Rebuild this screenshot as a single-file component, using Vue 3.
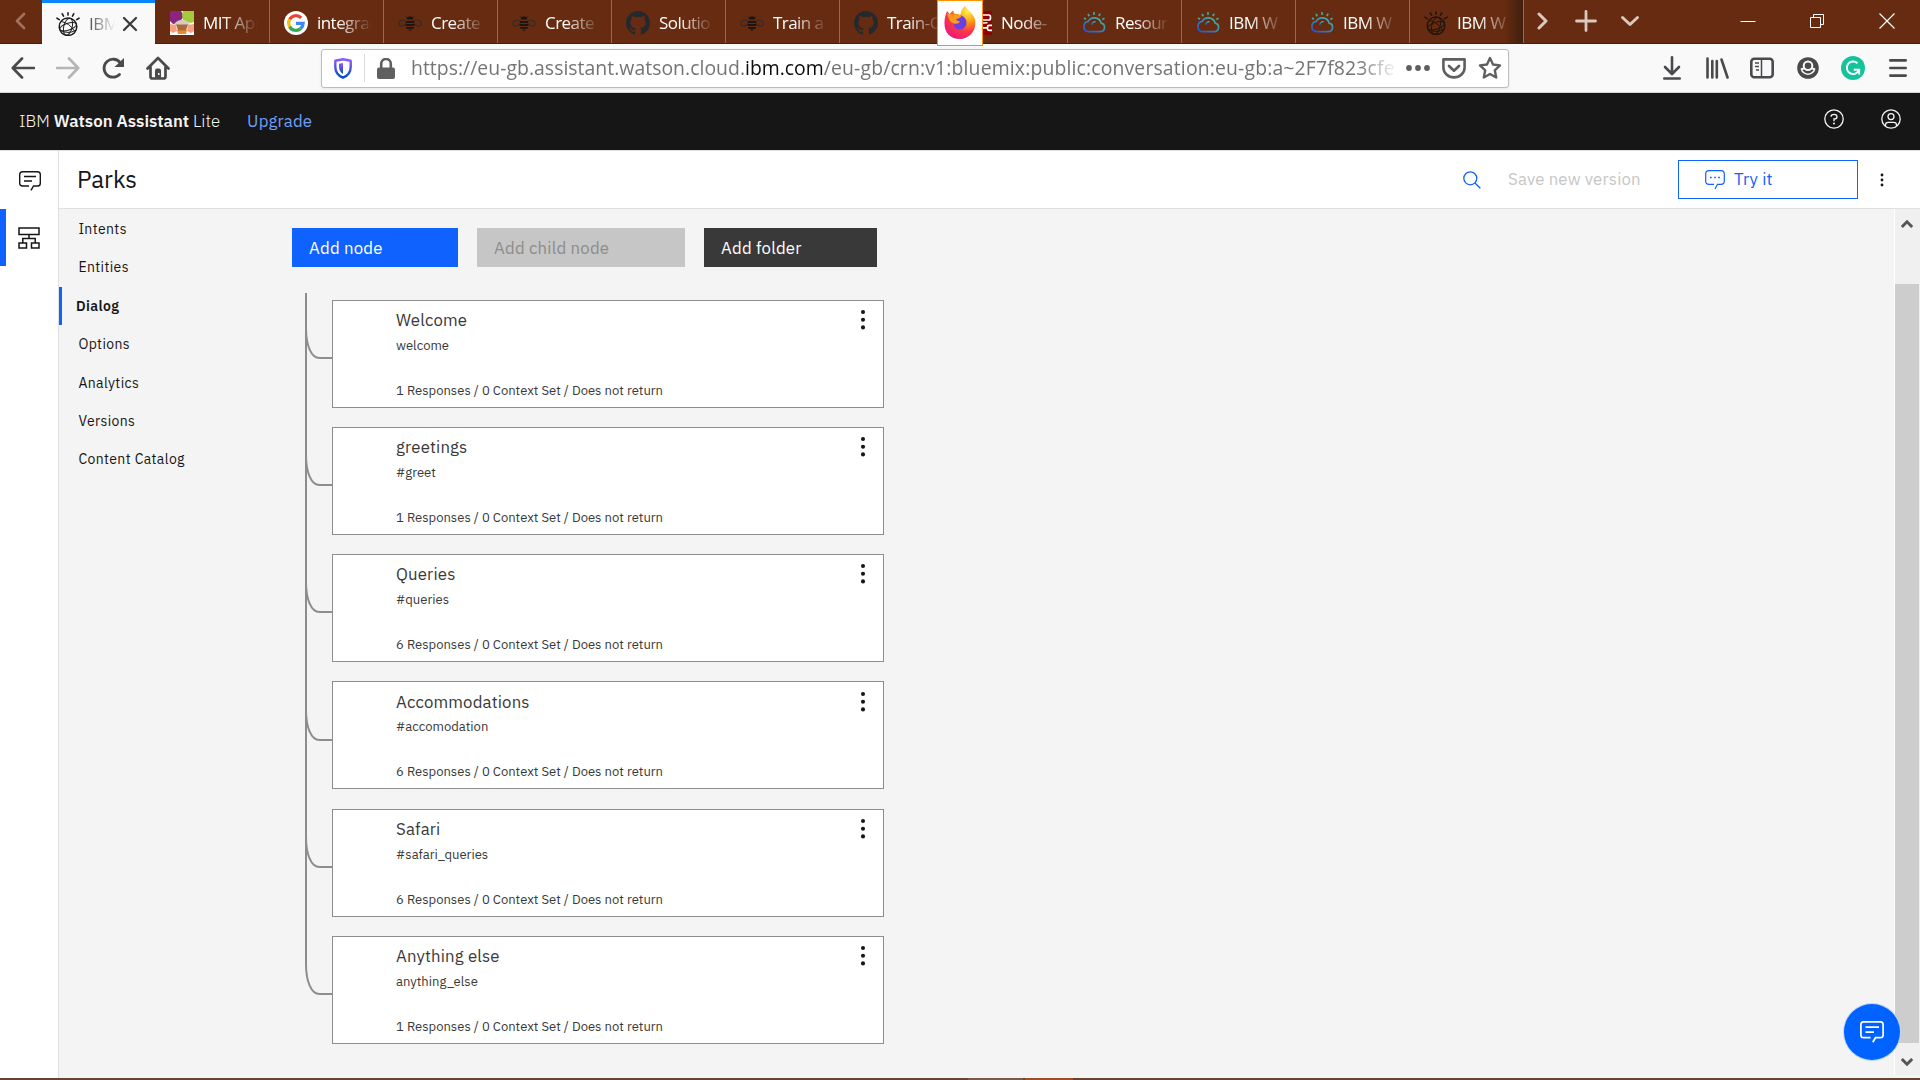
<script setup>
const tabs = [
  { icon: 'mit', title: 'MIT App' },
  { icon: 'google', title: 'integrat' },
  { icon: 'bee', title: 'Create' },
  { icon: 'bee', title: 'Create' },
  { icon: 'github', title: 'Solutio' },
  { icon: 'bee', title: 'Train a' },
  { icon: 'github', title: 'Train-C' },
  { icon: 'nodered', title: 'Node-' },
  { icon: 'cloud', title: 'Resour' },
  { icon: 'cloud', title: 'IBM W' },
  { icon: 'cloud', title: 'IBM W' },
  { icon: 'watson', title: 'IBM W' },
]
const menu = ['Intents', 'Entities', 'Dialog', 'Options', 'Analytics', 'Versions', 'Content Catalog']
const nodes = [
  { name: 'Welcome', cond: 'welcome', n: 1 },
  { name: 'greetings', cond: '#greet', n: 1 },
  { name: 'Queries', cond: '#queries', n: 6 },
  { name: 'Accommodations', cond: '#accomodation', n: 6 },
  { name: 'Safari', cond: '#safari_queries', n: 6 },
  { name: 'Anything else', cond: 'anything_else', n: 1 },
]
const pitch = 127.2
const branch = (i) => {
  const y = Math.round(65 + pitch * i)
  return `M1 ${y - 30}C1 ${y - 13} 6 ${y} 14.5 ${y}H27`
}
</script>

<template>
  <div class="screen">
    <svg class="defs" width="0" height="0">
      <defs>
        <linearGradient id="cloudg" x1="0" y1="1" x2="1" y2="0"><stop offset="0" stop-color="#2a4fd0" /><stop offset=".6" stop-color="#3a8fb5" /><stop offset="1" stop-color="#4fc08d" /></linearGradient>
        <linearGradient id="shieldg" x1="0" y1="0" x2="0" y2="1"><stop offset="0" stop-color="#9059ff" /><stop offset="1" stop-color="#0250bb" /></linearGradient>
        <radialGradient id="foxg" cx=".75" cy=".15" r="1"><stop offset="0" stop-color="#fff44f" /><stop offset=".35" stop-color="#ff980e" /><stop offset=".62" stop-color="#ff3647" /><stop offset="1" stop-color="#e31587" /></radialGradient>
        <symbol id="watson" viewBox="0 0 24 24">
          <g fill="none" stroke="currentColor" stroke-width="1" stroke-linecap="round">
            <circle cx="12" cy="14.700" r="8.800" stroke-width="1.500" />
            <ellipse cx="12" cy="14.700" rx="8.700" ry="3.400" transform="rotate(-18 12 14.700)" />
            <ellipse cx="12" cy="14.700" rx="4.200" ry="8.700" transform="rotate(14 12 14.700)" />
            <path d="M4.500 18.500q7.500 4 15 0M5.500 9.500q8 1.500 13 9.500" />
            <path stroke-width="1.600" d="M12 .900v2.200M6.300 1.800l1.200 2.300M17.700 1.800l-1.200 2.300M1 6.200l2.300 1.400M23 6.200l-2.300 1.400" />
          </g>
        </symbol>
      </defs>
    </svg>

    <div class="tabstrip">
      <div class="scroll-back">
        <svg width="12" height="18" viewBox="0 0 12 18"><path d="M10 2L3 9l7 7" fill="none" stroke="#a0705c" stroke-width="2.800" stroke-linecap="round" stroke-linejoin="round" /></svg>
      </div>
      <div class="tab active">
        <svg width="24" height="24" class="fav dark"><use href="#watson" /></svg>
        <span class="tab-title">IBM</span>
        <svg class="close" width="16" height="16" viewBox="0 0 16 16"><path d="M2 2l12 12M14 2L2 14" stroke="#3d3d3f" stroke-width="2.300" stroke-linecap="round" /></svg>
      </div>
      <div v-for="(t, i) in tabs" :key="i" class="tab">
        <svg v-if="t.icon === 'mit'" class="fav" width="24" height="24" viewBox="0 0 24 24">
          <path fill="#fff" d="M0 0h24v24H0z" /><path fill="#8b2580" d="M0 0h11l3 5-5 7-6 1-3-3z" /><path fill="#a4cb3a" d="M13 0h11v11l-4 1-7-3-1-5z" /><path fill="#f4a083" d="M0 13l6 1 1 6-4 2-3-2zM24 13l-6 1-1 6 4 2 3-2z" /><path fill="#f08a2c" d="M7 19h10l-1 4H8z" /><path fill="#d9cabd" d="M4 14q2-5 8-5t8 5z" /><path fill="#a86a3d" d="M6 13.500h12l-2 6H8z" />
        </svg>
        <svg v-else-if="t.icon === 'google'" class="fav" width="24" height="24" viewBox="0 0 24 24">
          <circle cx="12" cy="12" r="12" fill="#fff" />
          <g fill="none" stroke-width="3.200"><path stroke="#ea4335" d="M5.600 8.400A7.300 7.300 0 0 1 17.200 6.900" /><path stroke="#fbbc05" d="M5.600 15.600A7.300 7.300 0 0 1 5.600 8.400" /><path stroke="#34a853" d="M16.800 17.500A7.300 7.300 0 0 1 5.600 15.600" /><path stroke="#4285f4" d="M12 12.300h7.200A7.300 7.300 0 0 1 16.800 17.500" /></g>
        </svg>
        <svg v-else-if="t.icon === 'bee'" class="fav" width="24" height="24" viewBox="0 0 24 24">
          <g fill="none" stroke="#3b2a22" stroke-width="1.300"><path d="M9 11C5 7.500 1 9.500.800 13c1 3.500 6 2.500 8.200-2zM15 11c4-3.500 8-1.500 8.200 2-1 3.500-6 2.500-8.200-2z" /><path d="M9.500 7.500L8 5.200M14.500 7.500L16 5.200" /></g>
          <path fill="#1c1512" d="M9 7.300C9 5 15 5 15 7.300v1.200H9zM8 10h8v2H8zM7.500 13h9v2h-9zM8.200 16h7.600v1.700H8.200zM10 18.500h4L12 20z" />
        </svg>
        <svg v-else-if="t.icon === 'github'" class="fav" width="24" height="24" viewBox="0 0 16 16">
          <path fill="#24292e" d="M8 0C3.580 0 0 3.580 0 8c0 3.540 2.290 6.530 5.470 7.590.4.070.55-.17.55-.38 0-.19-.01-.82-.01-1.490-2.010.37-2.530-.49-2.690-.94-.09-.23-.48-.94-.82-1.130-.28-.15-.68-.52-.01-.53.63-.01 1.080.58 1.230.82.72 1.210 1.870.87 2.330.66.07-.52.28-.87.51-1.070-1.780-.2-3.640-.89-3.640-3.950 0-.87.31-1.590.82-2.150-.08-.2-.36-1.020.08-2.120 0 0 .67-.21 2.200.82.64-.18 1.320-.27 2-.27s1.360.09 2 .27c1.530-1.040 2.200-.82 2.200-.82.44 1.100.16 1.920.08 2.120.51.56.82 1.270.82 2.150 0 3.070-1.870 3.750-3.650 3.950.29.25.54.73.54 1.480 0 1.070-.01 1.930-.01 2.200 0 .21.15.46.55.38A8.010 8.010 0 0 0 16 8c0-4.420-3.580-8-8-8z" />
        </svg>
        <svg v-else-if="t.icon === 'nodered'" class="fav" width="24" height="24" viewBox="0 0 24 24">
          <rect width="24" height="24" rx="2" fill="#8f0000" /><path fill="none" stroke="#fff" stroke-width="1.700" d="M13 4h8q1.500 0 1.500 2v1q0 2-1.500 2h-6M13 12h3q3 0 3.500-.500M24 14.300h-3q-1.500 0-1.500 1.500v2q0 1.500 1.500 1.500h3M19 16.800h-6" />
        </svg>
        <svg v-else-if="t.icon === 'cloud'" class="fav" width="24" height="24" viewBox="0 0 24 24">
          <g fill="none" stroke="url(#cloudg)" stroke-width="1.700"><path d="M6 20.600h12.500a4.300 4.300 0 0 0 .6-8.500A7 7 0 0 0 6.200 10.400 5.200 5.200 0 0 0 6 20.600z" /><path d="M9.500 14q.8-3 4-3.300" stroke-width="1.200" /></g>
          <path fill="none" stroke="#4aa596" stroke-width="1.700" d="M2 7l2 1.300M6 3l1.300 2.200M12 1v3M18.200 2.600L16.800 5M22.500 7.200L20.300 8.500" />
        </svg>
        <svg v-else width="24" height="24" class="fav brownish"><use href="#watson" /></svg>
        <span class="tab-title">{{ t.title }}</span>
      </div>
      <div class="strip-tools">
        <svg width="12" height="20" viewBox="0 0 12 20"><path d="M2 3l7 7-7 7" fill="none" stroke="#dbc8bf" stroke-width="3" stroke-linecap="round" stroke-linejoin="round" /></svg>
        <svg class="plus" width="22" height="22" viewBox="0 0 22 22"><path d="M11 1.500v19M1.500 11h19" stroke="#dbc8bf" stroke-width="2.800" stroke-linecap="round" /></svg>
        <svg class="down" width="20" height="12" viewBox="0 0 20 12"><path d="M2.500 2.500L10 9.500l7.500-7" fill="none" stroke="#dbc8bf" stroke-width="3" stroke-linecap="round" stroke-linejoin="round" /></svg>
      </div>
      <div class="window-tools">
        <svg width="16" height="16" viewBox="0 0 16 16"><path d="M.500 8.500h15" stroke="#fff" /></svg>
        <svg width="16" height="16" viewBox="0 0 16 16"><path d="M1.500 4.500h10v10h-10zM4.500 4.500v-3h10v10h-3" fill="none" stroke="#fff" /></svg>
        <svg width="18" height="18" viewBox="0 0 18 18"><path d="M1.500 1.500l15 15M16.500 1.500l-15 15" stroke="#fff" stroke-width="1.200" /></svg>
      </div>
      <div class="fox">
        <svg width="32" height="33" viewBox="0 0 32 33">
          <path fill="url(#foxg)" d="M21 0c1 3 7 6 9.500 12C34 23 26 33 16 33S0 26 .500 16C.700 11 2 8 3 5l2.500 3L9 4.500l1.500 3.300c2 0 4 .200 6 1C17 5 18 2.500 21 0z" />
          <path fill="#6b3fe0" d="M16.500 9.500c4 .500 6.200 4 6 7.500-.300 4-3.200 6.500-6.700 6.500S9.600 21 9.600 17.500c2.500.600 4-.500 5.500-1.800-2-.200-3.700-1-4-2.700 2.200-.200 4.400-1 5.400-3.500z" />
          <path fill="#ff9a1f" d="M3 7c2 1.500 4 1.500 7 1.200 2.500 1.500 5 1 7.500 2-1.500 2-4 2.500-5.500 3 .5 1.500 2.500 2 4 2-1 2.500-4 3-6.500 2C6 16.500 4 12 3 7z" />
        </svg>
      </div>
    </div>

    <div class="toolbar">
      <div class="nav-icons">
        <svg width="24" height="22" viewBox="0 0 24 22"><path d="M11 1.500L1.800 11l9.200 9.500M2 11h21" fill="none" stroke="#4a4a4c" stroke-width="2.700" stroke-linecap="round" stroke-linejoin="round" /></svg>
        <svg width="24" height="22" viewBox="0 0 24 22"><path d="M13 1.500L22.200 11 13 20.500M22 11H1" fill="none" stroke="#b5b5b6" stroke-width="2.700" stroke-linecap="round" stroke-linejoin="round" /></svg>
        <svg width="24" height="22" viewBox="0 0 24 22"><path d="M18.500 17.500A9 9 0 1 1 19 5.500" fill="none" stroke="#4a4a4c" stroke-width="2.800" stroke-linecap="round" /><path d="M23 1v9h-9.500z" fill="#4a4a4c" /></svg>
        <svg width="24" height="24" viewBox="0 0 24 24"><path d="M1.500 12.500L12 2l10.500 10.500M4.500 11v9.500q0 2 2 2h11q2 0 2-2V11" fill="none" stroke="#4a4a4c" stroke-width="2.700" stroke-linecap="round" stroke-linejoin="round" /><path fill="#4a4a4c" d="M9 23v-8.500q0-2 2-2h2q2 0 2 2V23z" /><path fill="#f9f9fa" d="M12 17h1.500v2H12z" /></svg>
      </div>
      <div class="urlbar">
        <svg width="18" height="21" viewBox="0 0 18 21"><path fill="none" stroke="url(#shieldg)" stroke-width="2.400" stroke-linejoin="round" d="M9 1.200l7.700 1.500v6c0 5-3 9-7.700 11-4.700-2-7.700-6-7.700-11v-6z" /><path fill="url(#shieldg)" d="M9 5v11C6 14 5 11.500 5 8.500V5.800z" /></svg>
        <i class="sep"></i>
        <svg width="18" height="21" viewBox="0 0 18 21"><rect y="9.500" width="18" height="11.500" rx="2" fill="#5f5f60" /><path d="M4.200 10V5.800a4.800 4.800 0 0 1 9.600 0V10" fill="none" stroke="#5f5f60" stroke-width="2.600" /></svg>
        <div class="url"><span class="u1">https://eu-gb.assistant.watson.cloud.</span><b>ibm.com</b><span class="u2">/eu-gb/crn:v1:bluemix:public:conversation:eu-gb:a~2F7f823cfe</span></div>
        <svg class="dots" width="24" height="6" viewBox="0 0 24 6"><path d="M3 3h0M12 3h0M21 3h0" stroke="#5f5f60" stroke-width="5.800" stroke-linecap="round" /></svg>
        <svg class="pocket" width="24" height="21" viewBox="0 0 24 21"><path d="M1.400 1.400h21.200v8a10.600 10 0 0 1-21.200 0z" fill="none" stroke="#5f5f60" stroke-width="2.600" stroke-linejoin="round" /><path d="M7 8l5 4.700L17 8" fill="none" stroke="#5f5f60" stroke-width="2.700" stroke-linecap="round" stroke-linejoin="round" /></svg>
        <svg width="24" height="24" viewBox="0 0 24 24"><path d="M12 2l3 6.500 7 .900-5.200 4.900 1.400 7.200L12 18l-6.200 3.500 1.400-7.200L2 9.400l7-.9z" fill="none" stroke="#5f5f60" stroke-width="2.400" stroke-linejoin="round" /></svg>
      </div>
      <div class="right-icons">
        <svg width="18" height="24" viewBox="0 0 18 24"><path d="M9 1.300v16M2 11l7 7 7-7M1.300 22.500h15.400" fill="none" stroke="#4a4a4c" stroke-width="2.600" stroke-linecap="round" stroke-linejoin="round" /></svg>
        <svg width="23" height="22" viewBox="0 0 23 22"><path d="M1.500 1.500v19M6.300 4v16.500M10.800 4v16.500M15.500 2.500l6 18" fill="none" stroke="#4a4a4c" stroke-width="2.600" stroke-linecap="round" /></svg>
        <svg width="24" height="22" viewBox="0 0 24 22"><rect x="1.300" y="1.700" width="21.400" height="18.600" rx="3" fill="none" stroke="#4a4a4c" stroke-width="2.600" /><path d="M11.500 2v18M5 6h4M5 9.500h4M6 13h3" stroke="#4a4a4c" stroke-width="1.500" /></svg>
        <svg width="22" height="22" viewBox="0 0 22 22"><circle cx="11" cy="11" r="10.800" fill="#4a4a4c" /><circle cx="11" cy="8.700" r="4.300" fill="none" stroke="#f9f9fa" stroke-width="2" /><path d="M3.800 12.300q2.200-.800 3.700-.800M18.200 12.300q-2.200-.800-3.700-.800" fill="none" stroke="#f9f9fa" stroke-width="1.800" /><path d="M4.500 13.200q2.600 4 6.500 4t6.500-4" fill="none" stroke="#f9f9fa" stroke-width="1.500" /></svg>
        <svg width="24" height="24" viewBox="0 0 24 24"><circle cx="12" cy="12" r="12" fill="#15c39a" /><path d="M16.500 7.200A6.300 6.300 0 1 0 17.800 14.500M12.800 13.800h5.400v4.600" fill="none" stroke="#fff" stroke-width="1.900" /></svg>
        <svg width="18" height="18" viewBox="0 0 18 18"><path d="M1.300 1.400h15.400M1.300 9h15.400M1.300 16.600h15.400" stroke="#4a4a4c" stroke-width="2.600" stroke-linecap="round" /></svg>
      </div>
    </div>

    <header class="apphead">
      <span class="light">IBM</span><b>Watson Assistant</b><span class="light">Lite</span>
      <a>Upgrade</a>
      <div class="head-icons">
        <svg width="20" height="20" viewBox="0 0 20 20"><circle cx="10" cy="10" r="9.200" fill="none" stroke="#f4f4f4" stroke-width="1.300" /><path d="M7 7.700q0-2.400 3-2.400t3 2.400q0 2.300-3 2.300v2.200" fill="none" stroke="#f4f4f4" stroke-width="1.300" /><circle cx="10" cy="14.600" r="1" fill="#f4f4f4" /></svg>
        <svg width="20" height="20" viewBox="0 0 20 20"><circle cx="10" cy="10" r="9.200" fill="none" stroke="#f4f4f4" stroke-width="1.300" /><circle cx="10" cy="7.600" r="3" fill="none" stroke="#f4f4f4" stroke-width="1.300" /><path d="M4.500 17v-1q0-2.700 2.700-2.700h5.600q2.700 0 2.700 2.700v1" fill="none" stroke="#f4f4f4" stroke-width="1.300" /></svg>
      </div>
    </header>

    <div class="workspace">
      <aside class="rail">
        <div class="rail-item first">
          <svg width="22" height="20" viewBox="0 0 22 20"><path d="M10 15H3.500Q.700 15 .700 12.200V3.500Q.700.700 3.500.700h15q2.800 0 2.800 2.800v8.700q0 2.800-2.800 2.800h-4L12 19.300M5 5.500h12M5 10h8" fill="none" stroke="#161616" stroke-width="1.400" /></svg>
        </div>
        <div class="rail-item on">
          <svg width="22" height="22" viewBox="0 0 22 22"><path d="M1 1h20v6.500H1zM1 16h7.500v5H1zM13.500 16H21v5h-7.500zM11 7.500v4M4.800 16v-4.500h12.400V16" fill="none" stroke="#161616" stroke-width="1.500" /></svg>
        </div>
      </aside>
      <div class="column">
        <div class="titlebar">
          <h1>Parks</h1>
          <svg class="search" width="18" height="18" viewBox="0 0 18 18"><circle cx="7.300" cy="7.300" r="6.500" fill="none" stroke="#0f62fe" stroke-width="1.300" /><path d="M12 12l5.300 5.300" stroke="#0f62fe" stroke-width="1.400" /></svg>
          <span class="save">Save new version</span>
          <div class="tryit">
            <svg width="20" height="20" viewBox="0 0 20 20"><path d="M9 14.300H4Q.700 14.300.700 11V4Q.700.700 4 .700h12q3.300 0 3.300 3.300v7q0 3.300-3.300 3.300h-3.500L10 19" fill="none" stroke="#0f62fe" stroke-width="1.200" /><path d="M5 7.500h1.700M9.100 7.500h1.700M13.200 7.500h1.700" stroke="#0f62fe" stroke-width="1.700" /></svg>
            <span>Try it</span>
          </div>
          <svg class="kebab" width="4" height="14" viewBox="0 0 4 14"><g fill="#161616"><circle cx="2" cy="2" r="1.400" /><circle cx="2" cy="7" r="1.400" /><circle cx="2" cy="12" r="1.400" /></g></svg>
        </div>
        <div class="body">
          <nav>
            <div v-for="m in menu" :key="m" :class="['item', { current: m === 'Dialog' }]">{{ m }}</div>
          </nav>
          <main>
            <div class="buttons">
              <div class="btn add">Add node</div>
              <div class="btn child">Add child node</div>
              <div class="btn folder">Add folder</div>
            </div>
            <div class="tree">
              <svg width="27" height="752" viewBox="0 0 27 752" fill="none" stroke="#8d8d8d" stroke-width="2">
                <path d="M1 0V671.500" />
                <path v-for="(n, i) in nodes" :key="i" :d="branch(i)" />
              </svg>
              <div class="cards">
                <div v-for="n in nodes" :key="n.name" class="slot">
                  <div class="card">
                    <div class="info">
                      <div class="name">{{ n.name }}</div>
                      <div class="cond">{{ n.cond }}</div>
                      <div class="resp">{{ n.n }} Responses / 0 Context Set / Does not return</div>
                    </div>
                    <svg width="6" height="22" viewBox="0 0 6 22"><g fill="#161616"><circle cx="3" cy="3" r="2.050" /><circle cx="3" cy="10.700" r="2.050" /><circle cx="3" cy="18.400" r="2.050" /></g></svg>
                  </div>
                </div>
              </div>
            </div>
          </main>
          <div class="scrollbar">
            <svg width="12" height="10" viewBox="0 0 12 10"><path d="M.800 8L6 2.800 11.200 8" fill="none" stroke="#555" stroke-width="3" /></svg>
            <div class="thumb"></div>
            <svg width="12" height="10" viewBox="0 0 12 10"><path d="M.800 2L6 7.200 11.200 2" fill="none" stroke="#555" stroke-width="3" /></svg>
          </div>
        </div>
      </div>
      <div class="fab">
        <svg width="24" height="22" viewBox="0 0 24 22"><path d="M10.500 16.700H3.500Q.900 16.700.900 14V3.600Q.900.900 3.500.900h17q2.600 0 2.600 2.700V14q0 2.700-2.600 2.700h-5L12.800 21.300M5.500 6.200h13.500M5.500 11.200h8.500" fill="none" stroke="#fff" stroke-width="1.700" /></svg>
      </div>
    </div>
    <div class="taskbar"><i class="t1"></i><i class="t2"></i></div>
  </div>
</template>

<style>
body { overflow: hidden; }
</style>

<style scoped>
* { box-sizing: border-box; }
.screen { position: relative; width: 1920px; height: 1080px; display: flex; flex-direction: column; overflow: hidden; background: #f4f4f4; font-family: "IBM Plex Sans", Roboto, sans-serif; color: #161616; }
.defs { position: absolute; }
svg { display: block; flex: none; }

.tabstrip { position: relative; flex: none; height: 44px; display: flex; background: #662b10; border-bottom: 1px solid #45200f; font-family: "Open Sans", sans-serif; }
.scroll-back { width: 42px; display: flex; align-items: center; padding-left: 14px; padding-bottom: 2px; }
.tab { width: 114px; height: 43px; flex: none; display: flex; align-items: center; padding: 3px 9px 0 14px; border-right: 1px solid #94695a; color: #fff; }
.fav { margin-right: 9px; }
.tab-title { flex: 1; min-width: 0; white-space: nowrap; font-size: 17px; line-height: 24px; letter-spacing: -0.55px; mask-image: linear-gradient(90deg, #000 35%, transparent 96%); }
.tab.active { width: 113px; height: 44px; margin-right: 1px; background: #f9f9fa; border-top: 3px solid #0a84ff; border-right: 0; padding-top: 0; color: #4a4a4c; }
.active .tab-title { flex: none; width: 27px; mask-image: linear-gradient(90deg, #000 0, transparent 98%); }
.active .close { margin-left: 6px; }
.dark { color: #1d1d1f; }
.brownish { color: #24150e; }
.tab:nth-child(14) { background: linear-gradient(90deg, transparent 84%, #40200f); }
.strip-tools { display: flex; align-items: center; padding: 0 0 2px 13px; width: 214px; }
.plus { margin: 0 23px 0 26px; }
.window-tools { display: flex; align-items: center; gap: 53px; padding: 0 0 2px 2px; }
.fox { position: absolute; left: 937px; top: 0; width: 46px; height: 46px; background: #fff; border: 1px solid #ff9400; padding: 5px 0 0 6px; z-index: 3; }

.toolbar { flex: none; height: 49px; background: #f9f9fa; border-bottom: 1px solid #d6d6d6; display: flex; align-items: center; }
.nav-icons { flex: none; width: 321px; display: flex; align-items: center; gap: 21px; padding-left: 11px; }
.urlbar { flex: none; width: 1188px; height: 39px; background: #fff; border: 1px solid #bcbcbc; border-radius: 3px; box-shadow: 0 1px 3px rgba(0,0,0,.08); display: flex; align-items: center; padding-left: 12px; }
.sep { width: 1px; height: 28px; background: #dcdcdc; margin: 0 12px; }
.url { margin-left: 16px; width: 987px; overflow: hidden; white-space: nowrap; font: 19.4px/28px "Open Sans", sans-serif; color: #747476; mask-image: linear-gradient(90deg, #000 96%, transparent 100%); }
.url b { font-weight: 400; color: #0c0c0d; }
.u1 { letter-spacing: 0.03px; }
.u2 { letter-spacing: 0.15px; }
.dots { margin-left: 8px; }
.pocket { margin: 0 12px; }
.right-icons { flex: none; display: grid; grid-template-columns: repeat(6, 45.2px); place-items: center; margin-left: 140.5px; }

.apphead { flex: none; height: 57px; background: #161616; display: flex; align-items: center; padding: 0 19px 2px; font-size: 16.8px; color: #f4f4f4; }
.apphead b { font-weight: 600; margin: 0 4px; }
.light { font-weight: 300; }
.apphead a { color: #6ea0fa; margin-left: 27px; letter-spacing: .16px; }
.head-icons { margin-left: auto; display: flex; gap: 37px; padding-bottom: 3px; }

.workspace { position: relative; flex: 1; display: flex; min-height: 0; border-top: 1px solid #e0e0e0; }
.rail { width: 59px; background: #fff; border-right: 1px solid #e0e0e0; }
.rail-item { height: 57px; display: flex; align-items: center; padding-left: 19px; }
.first { height: 58px; padding-top: 1px; }
.rail-item.on { border-left: 6px solid #0f62fe; padding-left: 11.5px; }
.column { flex: 1; display: flex; flex-direction: column; min-width: 0; }
.titlebar { flex: none; height: 58px; background: #fff; border-bottom: 1px solid #e0e0e0; display: flex; align-items: center; padding-left: 18px; font-size: 16.8px; letter-spacing: .16px; }
h1 { margin: 0; padding-bottom: 2px; font-size: 24px; font-weight: 400; letter-spacing: 0; }
.search { margin-left: auto; }
.save { margin-left: 27px; width: 170px; padding-bottom: 2px; color: #c6c6c6; }
.tryit { width: 180px; height: 39px; border: 1px solid #0f62fe; color: #0f62fe; display: flex; align-items: center; gap: 9px; padding-left: 26px; }
.tryit span { padding-bottom: 1px; }
.kebab { margin: 0 36.5px 0 21.5px; }
.body { flex: 1; min-height: 0; display: flex; }
nav { width: 233px; padding-top: 1px; }
.item { height: 38.4px; line-height: 39px; padding-left: 19.400px; font-size: 14px; letter-spacing: .38px; }
.current { font-weight: 600; border-left: 3px solid #0f62fe; padding-left: 14px; }
main { flex: 1; padding-top: 19px; }
.buttons { display: flex; gap: 19px; }
.btn { height: 39px; line-height: 40px; padding-left: 17px; font-size: 16.8px; letter-spacing: .2px; color: #fff; }
.add { width: 166px; background: #0f62fe; }
.child { width: 208px; background: #c6c6c6; color: #8d8d8d; }
.folder { width: 173px; background: #393939; }
.tree { display: flex; margin: 26px 0 0 13px; }
.cards { padding-top: 6.8px; }
.slot { height: 127.2px; }
.card { width: 552px; height: 108px; background: #fff; border: 1px solid #8d8d8d; display: flex; justify-content: space-between; padding: 7px 17px 0 63px; color: #393939; }
.card svg { margin-top: 1.3px; }
.name { padding-top: .3px; font-size: 16.8px; line-height: 24px; letter-spacing: .16px; }
.cond { margin-top: 3.7px; font-size: 13.05px; line-height: 20px; }
.resp { margin-top: 25px; font-size: 13.05px; line-height: 20px; }
.scrollbar { width: 26px; background: #f0f0f0; border-left: 1px solid #fff; display: flex; flex-direction: column; align-items: center; padding: 10px 1px 0 0; margin-bottom: 3px; }
.thumb { width: 24px; height: 759px; background: #cdcdcd; margin: 55px 0 14px; }
.fab { position: absolute; right: 20px; bottom: 18px; width: 56px; height: 56px; border-radius: 50%; background: #0062ff; box-shadow: 0 0 0 1px #bcd5fa; display: flex; align-items: center; justify-content: center; }
.taskbar { flex: none; height: 2px; background: #6b4130; display: flex; padding-left: 968px; gap: 2px; }
.t1 { width: 55px; background: #7b584b; }
.t2 { width: 48px; background: #a04e27; }
</style>
